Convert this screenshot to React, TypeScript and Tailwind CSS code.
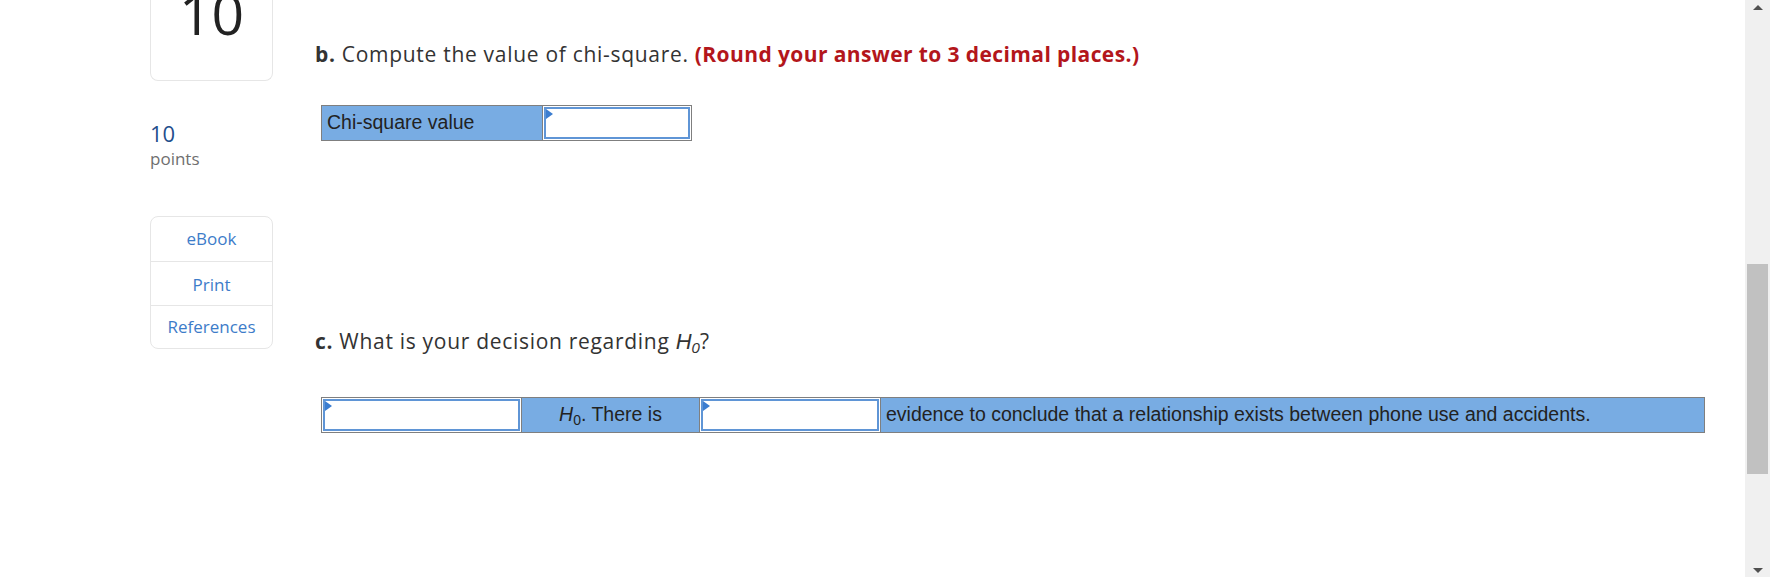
import React from "react";

function Flag() {
  return (
    <span className="pointer-events-none absolute left-0 top-0 h-0 w-0 border-y-[5px] border-l-[7px] border-y-transparent border-l-[#3b7dd0]" />
  );
}

function InputBox() {
  return (
    <div className="relative m-[1px] flex-1 border-2 border-[#5f95d6] bg-white">
      <Flag />
    </div>
  );
}

export default function App() {
  return (
    <div className="flex h-[577px] w-[1779px] overflow-hidden bg-white font-['Open_Sans',sans-serif]">
      <div className="flex flex-1">
        <aside className="ml-[150px] w-[123px] shrink-0">
          <div className="flex h-[81px] justify-center overflow-hidden rounded-b-[8px] border-x border-b border-[#e6e6e6]">
            <span className="-mt-[15px] text-[57px] leading-[56px] text-[#222]">10</span>
          </div>
          <div className="mt-[40px] text-[22px] leading-[24px] text-[#1f4e8c]">10</div>
          <div className="mt-[3px] text-[17px] leading-[22px] text-[#6f6f6f]">points</div>
          <div className="mt-[46px] flex flex-col overflow-hidden rounded-[8px] border border-[#e6e6e6] text-[17px] text-[#3d7cc9]">
            <div className="flex h-[45px] items-center justify-center border-b border-[#e6e6e6]">eBook</div>
            <div className="flex h-[44px] items-center justify-center border-b border-[#e6e6e6] pt-[3px]">Print</div>
            <div className="flex h-[42px] items-center justify-center">References</div>
          </div>
        </aside>

        <main className="ml-[42px] flex-1 pt-[40px] text-[#333]">
          <p className="text-[21px] leading-[28px] tracking-[0.7px]">
            <b>b.</b> Compute the value of chi-square.{" "}
            <b className="tracking-[0.4px] text-[#b3161b]">(Round your answer to 3 decimal places.)</b>
          </p>

          <div className="ml-[6px] mt-[37px] flex h-[36px] w-[371px] border border-[#7f7f7f] font-['Liberation_Sans',Arial,sans-serif] text-[19.5px] text-[#222]">
            <div className="flex w-[220px] items-center bg-[#78ace3] pl-[5px]">Chi-square value</div>
            <div className="flex flex-1 border-l border-[#7f7f7f]">
              <InputBox />
            </div>
          </div>

          <p className="mt-[186px] text-[21px] leading-[28px] tracking-[0.7px]">
            <b>c.</b> What is your decision regarding{" "}
            <i className="font-['Liberation_Sans',Arial,sans-serif] text-[22px] tracking-normal">
              H<sub className="text-[15px]">0</sub>
            </i>
            ?
          </p>

          <div className="ml-[6px] mt-[41px] flex h-[36px] w-[1384px] border border-[#7f7f7f] font-['Liberation_Sans',Arial,sans-serif] text-[19.5px] text-[#222]">
            <div className="flex w-[199px] bg-white">
              <InputBox />
            </div>
            <div className="flex w-[178px] items-center justify-center border-l border-[#7f7f7f] bg-[#78ace3]">
              <span>
                <i>H</i>
                <sub className="text-[14px]">0</sub>. There is
              </span>
            </div>
            <div className="flex w-[181px] border-l border-[#7f7f7f] bg-white">
              <InputBox />
            </div>
            <div className="flex flex-1 items-center border-l border-[#7f7f7f] bg-[#78ace3] pl-[5px]">
              evidence to conclude that a relationship exists between phone use and accidents.
            </div>
          </div>
        </main>
      </div>

      <div className="relative flex w-[25px] shrink-0 flex-col bg-[#f0f0f0]">
        <div className="flex h-[14px] items-center justify-center">
          <span className="h-0 w-0 border-x-[5px] border-b-[5px] border-x-transparent border-b-[#505050]" />
        </div>
        <div className="mx-[2px] mt-[250px] h-[210px] bg-[#c1c1c1]" />
        <div className="mt-auto flex h-[14px] items-center justify-center">
          <span className="h-0 w-0 border-x-[5px] border-t-[5px] border-x-transparent border-t-[#505050]" />
        </div>
      </div>
      <div className="w-[9px] shrink-0 bg-white" />
    </div>
  );
}
